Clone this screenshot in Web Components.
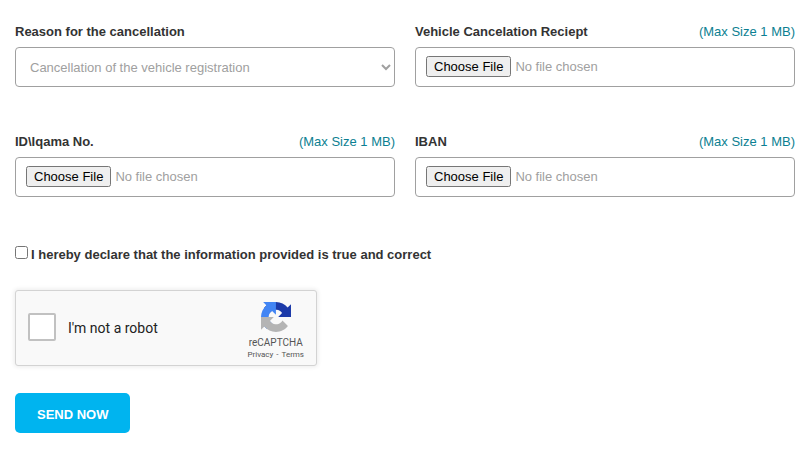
<!DOCTYPE html>
<html lang="en">

<head>
    <meta charset="UTF-8">
    <meta name="viewport" content="width=device-width, initial-scale=1.0">
    <title>Cancellation request</title>
    <style>
        body {
            margin: 0;
            background: #fff;
            color: #333;
            font: 13px/20px "Liberation Sans", Arial, sans-serif;
        }
    </style>
</head>

<body>
    <cancel-form></cancel-form>

    <script>
        // shared by the select field and the file fields
        const fieldStyles = `
    <style>
        :host {
            display: block;
        }
        .head {
            display: flex;
            justify-content: space-between;
            margin-bottom: 5px;
        }
        label {
            font-weight: bold;
        }
        .hint {
            color: #0c7f92;
        }
        select, input {
            display: block;
            box-sizing: border-box;
            width: 100%;
            height: 40px;
            border: 1px solid #a0a0a0;
            border-radius: 4px;
            background: #fff;
            color: #a0a0a0;
            font: inherit;
        }
        select {
            padding: 0 1px 0 10px;
        }
        input {
            padding: 8px 10px;
        }
        input::file-selector-button {
            font-size: 13px;
            height: 21px;
        }
    </style>`;

        const selectTemplate = document.createElement("template");
        selectTemplate.innerHTML = `${fieldStyles}
    <div class="head"><label for="control"><slot></slot></label></div>
    <select id="control"></select>`;

        const fileTemplate = document.createElement("template");
        fileTemplate.innerHTML = `${fieldStyles}
    <div class="head">
        <label for="control"><slot></slot></label>
        <span class="hint"></span>
    </div>
    <input type="file" id="control">`;

        const declareTemplate = document.createElement("template");
        declareTemplate.innerHTML = `
    <style>
        :host {
            display: flex;
            align-items: flex-start;
            gap: 3px;
        }
        input {
            margin: 1px 0 0;
            flex: none;
        }
        label {
            font-weight: bold;
        }
    </style>
    <input type="checkbox" id="agree"><label for="agree"><slot></slot></label>`;

        const robotTemplate = document.createElement("template");
        robotTemplate.innerHTML = `
    <style>
        :host {
            display: flex;
            align-items: center;
            box-sizing: border-box;
            width: 302px;
            max-width: 100%;
            height: 76px;
            padding: 0 11px 0 12px;
            border: 1px solid #d3d3d3;
            border-radius: 3px;
            background: #f9f9f9;
            box-shadow: 0 0 4px 1px rgba(0, 0, 0, 0.08);
            color: #000;
            font-family: Roboto, sans-serif;
        }
        input {
            appearance: none;
            box-sizing: border-box;
            width: 28px;
            height: 28px;
            margin: 0 12px 2px 0;
            border: 2px solid #c1c1c1;
            border-radius: 2px;
            background: #fff;
        }
        label {
            flex: 1;
            color: #222;
            font-size: 14px;
        }
        .brand {
            display: flex;
            flex-direction: column;
            align-items: center;
            padding-top: 6px;
            color: #555;
            font-size: 10px;
            line-height: 12px;
        }
        svg {
            width: 30px;
            height: 30px;
            margin-bottom: 5px;
        }
        .links {
            font-size: 8px;
        }
        a {
            padding: 0 1px;
            color: inherit;
            text-decoration: none;
        }
    </style>
    <input type="checkbox" id="robot"><label for="robot">I'm not a robot</label>
    <div class="brand">
        <svg viewBox="0 0 64 64" aria-hidden="true">
            <path fill="#1c3aa9" d="M64 31.955l-.018-1.37V4.687l-7.16 7.16C50.962 4.674 42.03.093 32.033.093c-10.403 0-19.645 4.96-25.475 12.642l11.736 11.86a15.55 15.55 0 0 1 4.754-5.334c2.05-1.6 4.952-2.906 8.968-2.906.485 0 .86.057 1.135.163 4.976.393 9.288 3.14 11.828 7.124l-8.307 8.307L64 31.953"/>
            <path fill="#4285f4" d="M31.862.094l-1.37.018H4.594l7.16 7.16C4.58 13.147 0 22.08 0 32.076c0 10.403 4.96 19.645 12.642 25.475l11.86-11.736a15.55 15.55 0 0 1-5.334-4.754c-1.6-2.05-2.906-4.952-2.906-8.968 0-.485.057-.86.163-1.135.393-4.976 3.14-9.288 7.124-11.828l8.307 8.307L31.86.095"/>
            <path fill="#b4b4b4" d="M.001 32.045l.018 1.37v25.898l7.16-7.16c5.873 7.173 14.806 11.754 24.802 11.754 10.403 0 19.645-4.96 25.475-12.642l-11.736-11.86a15.55 15.55 0 0 1-4.754 5.334c-2.05 1.6-4.952 2.906-8.968 2.906-.485 0-.86-.057-1.135-.163-4.976-.393-9.288-3.14-11.828-7.124l8.307-8.307c-10.522.04-22.4.066-27.295-.005"/>
        </svg>
        <span>reCAPTCHA</span>
        <span class="links"><a href="#privacy">Privacy</a> - <a href="#terms">Terms</a></span>
    </div>`;

        const formTemplate = document.createElement("template");
        formTemplate.innerHTML = `
    <style>
        :host {
            display: block;
            padding: 22px 9px 21px 15px;
        }
        .fields {
            display: grid;
            grid-template-columns: 1fr 1fr;
            gap: 45px 20px;
        }
        declare-check {
            margin-top: 48px;
        }
        robot-check {
            margin-top: 25px;
        }
        button {
            display: block;
            height: 40px;
            margin-top: 27px;
            padding: 2px 21px 0 22px;
            border: 0;
            border-radius: 5px;
            background: #00b4ef;
            color: #fff;
            font: bold 13px "Liberation Sans", Arial, sans-serif;
        }
    </style>
    <form>
        <div class="fields">
            <select-field data-options="Cancellation of the vehicle registration">Reason for the cancellation</select-field>
            <file-field data-hint="(Max Size 1 MB)">Vehicle Cancelation Reciept</file-field>
            <file-field data-hint="(Max Size 1 MB)">ID\\Iqama No.</file-field>
            <file-field data-hint="(Max Size 1 MB)">IBAN</file-field>
        </div>
        <declare-check>I hereby declare that the information provided is true and correct</declare-check>
        <robot-check></robot-check>
        <button type="button">SEND NOW</button>
    </form>`;

        class SelectField extends HTMLElement {
            constructor() {
                super();
                this.attachShadow({ mode: "open" });
                this.shadowRoot.appendChild(selectTemplate.content.cloneNode(true));
            }

            connectedCallback() {
                const select = this.shadowRoot.querySelector("select");
                select.innerHTML = "";
                // options are separated by "|"
                for (const text of this.dataset.options.split("|")) {
                    select.add(new Option(text));
                }
            }
        }

        class FileField extends HTMLElement {
            constructor() {
                super();
                this.attachShadow({ mode: "open" });
                this.shadowRoot.appendChild(fileTemplate.content.cloneNode(true));
            }

            connectedCallback() {
                this.shadowRoot.querySelector(".hint").textContent = this.dataset.hint;
            }
        }

        class DeclareCheck extends HTMLElement {
            constructor() {
                super();
                this.attachShadow({ mode: "open" });
                this.shadowRoot.appendChild(declareTemplate.content.cloneNode(true));
            }
        }

        class RobotCheck extends HTMLElement {
            constructor() {
                super();
                this.attachShadow({ mode: "open" });
                this.shadowRoot.appendChild(robotTemplate.content.cloneNode(true));
            }
        }

        class CancelForm extends HTMLElement {
            constructor() {
                super();
                this.attachShadow({ mode: "open" });
                this.shadowRoot.appendChild(formTemplate.content.cloneNode(true));
            }
        }

        customElements.define("select-field", SelectField);
        customElements.define("file-field", FileField);
        customElements.define("declare-check", DeclareCheck);
        customElements.define("robot-check", RobotCheck);
        customElements.define("cancel-form", CancelForm);
    </script>
</body>

</html>
